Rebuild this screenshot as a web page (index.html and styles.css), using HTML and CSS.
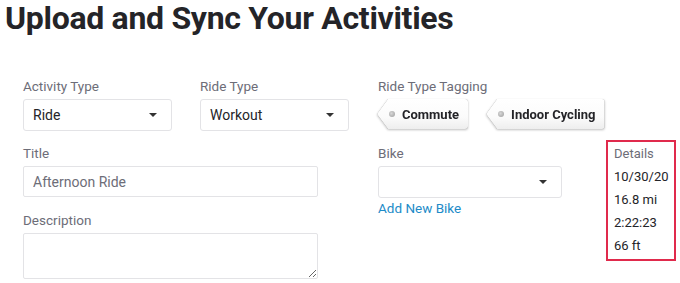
FILE: index.html
```html
<!DOCTYPE html>
<html lang="en">
<head>
<meta charset="utf-8">
<title>Upload and Sync Your Activities</title>
<link rel="stylesheet" href="styles.css">
</head>
<body>
<h1 class="page-title">Upload and Sync Your Activities</h1>
<form class="upload-form">
  <div class="field f-activity">
    <label class="field-label">Activity Type</label>
    <div class="select select-sm"><span class="select-value">Ride</span><span class="caret"></span></div>
  </div>
  <div class="field f-ridetype">
    <label class="field-label">Ride Type</label>
    <div class="select select-sm"><span class="select-value">Workout</span><span class="caret"></span></div>
  </div>
  <div class="field f-tagging">
    <label class="field-label">Ride Type Tagging</label>
    <div class="tags">
      <span class="tag"><span class="tag-body">Commute</span></span>
      <span class="tag"><span class="tag-body">Indoor Cycling</span></span>
    </div>
  </div>
  <div class="field f-title">
    <label class="field-label">Title</label>
    <input class="text-input" type="text" value="Afternoon Ride">
  </div>
  <div class="field f-bike">
    <label class="field-label">Bike</label>
    <div class="select select-bike"><span class="select-value"></span><span class="caret"></span></div>
    <a class="link" href="#">Add New Bike</a>
  </div>
  <div class="field f-desc">
    <label class="field-label">Description</label>
    <textarea class="text-area"></textarea>
  </div>
  <div class="details">
    <div class="details-head">Details</div>
    <div class="details-row">10/30/20</div>
    <div class="details-row">16.8 mi</div>
    <div class="details-row">2:22:23</div>
    <div class="details-row">66 ft</div>
  </div>
</form>
</body>
</html>
```
FILE: styles.css
```css
html, body {
  margin: 0;
  padding: 0;
  background: #ffffff;
}
body {
  font-family: "Roboto", "Inter", "Liberation Sans", sans-serif;
  color: #242428;
  width: 680px;
  height: 283px;
  overflow: hidden;
}
.page-title {
  margin: 0;
  padding-left: 5px;
  font-size: 32px;
  line-height: 36px;
  font-weight: 700;
  letter-spacing: -0.3px;
  color: #242428;
}
.upload-form {
  margin-top: 42px;
  padding-left: 23px;
  display: grid;
  grid-template-columns: 177px 178px 228px 70px;
  grid-template-rows: auto auto auto;
  row-gap: 14px;
  align-items: start;
}
.field {
  display: flex;
  flex-direction: column;
  align-items: flex-start;
}
.f-activity { grid-column: 1; grid-row: 1; }
.f-ridetype { grid-column: 2; grid-row: 1; }
.f-tagging { grid-column: 3 / span 2; grid-row: 1; }
.f-title { grid-column: 1 / span 2; grid-row: 2; }
.f-bike { grid-column: 3; grid-row: 2 / span 2; }
.f-desc { grid-column: 1 / span 2; grid-row: 3; margin-top: 1px; }
.field-label {
  font-size: 13.5px;
  line-height: 16px;
  color: #6d6d78;
  margin-bottom: 5px;
}
.select {
  box-sizing: border-box;
  height: 32px;
  border: 1px solid #e3e3e6;
  border-radius: 3px;
  background: #fff;
  display: flex;
  align-items: center;
  padding-left: 9px;
  font-size: 14px;
  color: #242428;
}
.select-sm { width: 149px; }
.select-bike { width: 184px; }
.select-value { flex: 1; }
.caret {
  width: 0;
  height: 0;
  border-left: 4px solid transparent;
  border-right: 4px solid transparent;
  border-top: 4px solid #333;
  margin-right: 14px;
}
.text-input {
  box-sizing: border-box;
  width: 295px;
  height: 31px;
  border: 1px solid #e3e3e6;
  border-radius: 2px;
  padding: 0 9px;
  font-family: inherit;
  font-size: 14px;
  color: #6d6d78;
  background: #fff;
  margin: 0;
  outline: none;
}
.text-area {
  box-sizing: border-box;
  width: 295px;
  height: 46px;
  border: 1px solid #e3e3e6;
  border-radius: 2px;
  margin: 0;
  padding: 6px 9px;
  font-family: inherit;
  resize: both;
  display: block;
}
.link {
  margin-top: 2px;
  font-size: 13.5px;
  line-height: 16px;
  color: #1d8bc8;
  text-decoration: none;
}
.tags {
  display: flex;
  gap: 18px;
  margin-left: -1px;
}
.tag {
  display: inline-flex;
  filter: drop-shadow(0 0 0.6px rgba(0,0,0,0.35)) drop-shadow(0 1.2px 0.8px rgba(0,0,0,0.25));
}
.tag-body {
  position: relative;
  display: inline-flex;
  align-items: center;
  height: 30px;
  padding: 0 9px 0 25px;
  font-size: 13px;
  font-weight: 700;
  color: #242428;
  background: linear-gradient(#ffffff 0%, #fbfbfb 60%, #eeeeee 100%);
  border-radius: 0 3px 3px 0;
  clip-path: polygon(11px 0, 100% 0, 100% 100%, 11px 100%, 0 50%);
}
.tag-body::before {
  content: "";
  position: absolute;
  left: 12px;
  top: 12px;
  width: 6px;
  height: 6px;
  border-radius: 50%;
  background: radial-gradient(circle at 40% 40%, #d8d8d8, #9c9c9c);
}
.details {
  grid-column: 4;
  grid-row: 2 / span 2;
  margin-top: -5px;
  box-sizing: border-box;
  width: 70px;
  border: 2px solid #e02a4c;
  padding: 0 0 2px 6px;
  font-size: 13px;
  line-height: 23px;
  color: #242428;
}
.details-head {
  color: #6d6d78;
}
```
